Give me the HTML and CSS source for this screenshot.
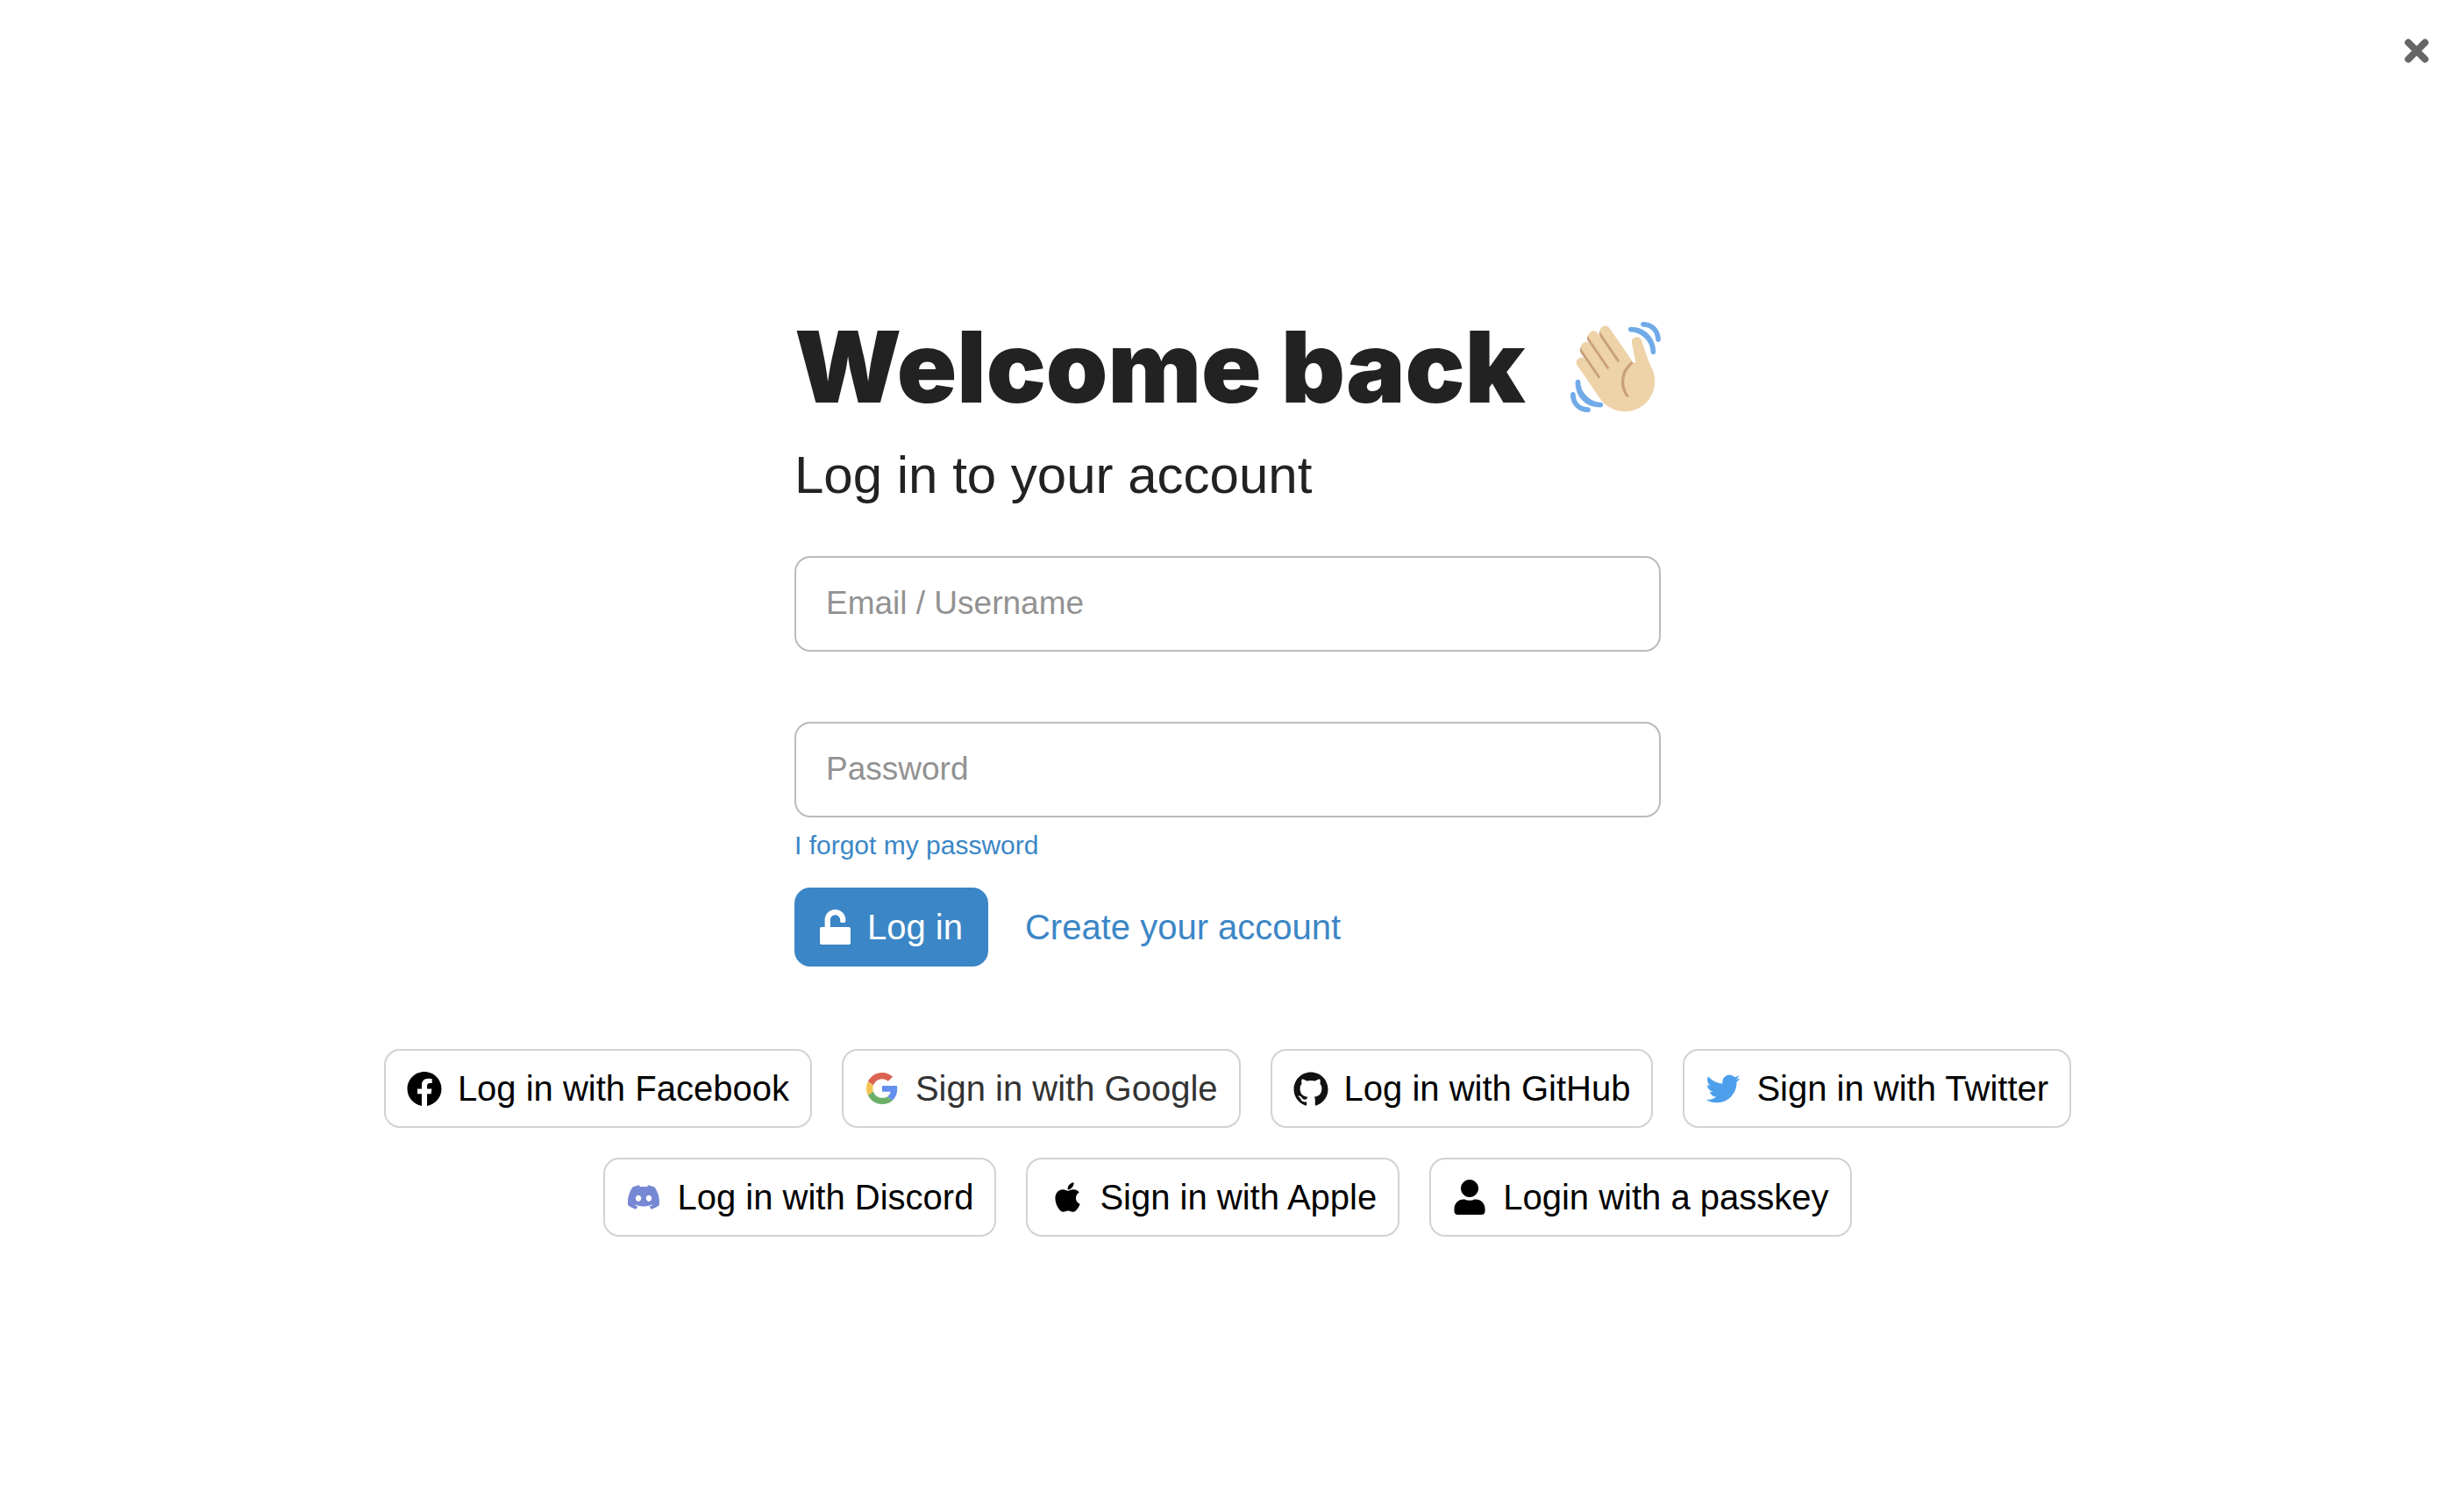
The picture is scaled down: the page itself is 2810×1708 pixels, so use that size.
FILE: index.html
```html
<!DOCTYPE html>
<html lang="en">
<head>
  <meta charset="utf-8">
  <meta name="viewport" content="width=device-width, initial-scale=1">
  <title>Log in</title>
  <link rel="stylesheet" href="styles.css">
</head>
<body>
  <header class="topbar">
    <button class="close" type="button" aria-label="Close">
      <svg viewBox="0 0 28 28" aria-hidden="true"><path d="M4.500 4.500l19 19M23.500 4.500l-19 19"/></svg>
    </button>
  </header>

  <main class="login">
    <section class="panel">
      <div class="title-row">
        <h1 class="title">Welcome back</h1>
        <svg class="wave" viewBox="0 0 36 36" aria-hidden="true">
          <path class="wave-shade" d="M4.861 9.147c.94-.657 2.357-.531 3.201.166l-.968-1.407c-.779-1.111-.5-2.313.612-3.093 1.112-.777 4.263 1.312 4.263 1.312-.786-1.122-.639-2.544.483-3.331 1.122-.784 2.67-.513 3.456.611l10.292 14.720L25 31l-11.083-4.042L4.250 12.625c-.793-1.129-.519-2.686.611-3.478z"/>
          <path class="wave-hand" d="M2.695 17.336s-1.132-1.650.519-2.781c1.649-1.131 2.780.518 2.780.518l5.251 7.658c.181-.302.379-.600.600-.894L4.557 11.210s-1.131-1.649.519-2.780c1.649-1.131 2.780.518 2.780.518l6.855 9.997c.255-.208.516-.417.785-.622L7.549 6.732s-1.131-1.649.519-2.780c1.649-1.131 2.780.518 2.780.518l7.947 11.589c.292-.179.581-.334.871-.498L12.238 4.729s-1.131-1.649.518-2.780c1.649-1.131 2.780.518 2.780.518l7.854 11.454 1.194 1.742c-4.948 3.394-5.419 9.779-2.592 13.902.565.825 1.390.260 1.390.260-3.393-4.949-2.357-10.510 2.592-13.903L24.515 8.620s-.545-1.924 1.378-2.470c1.924-.545 2.470 1.379 2.470 1.379l1.685 5.004c.668 1.984 1.379 3.961 2.320 5.831 2.657 5.280 1.070 11.842-3.940 15.279-5.465 3.747-12.936 2.354-16.684-3.110L2.695 17.336z"/>
          <path class="wave-motion" d="M12 32.042C8 32.042 3.958 28 3.958 24c0-.553-.405-1-.958-1s-1.042.447-1.042 1C1.958 30 6 34.042 12 34.042c.553 0 1-.489 1-1.042s-.447-.958-1-.958z"/>
          <path class="wave-motion" d="M7 34c-3 0-5-2-5-5 0-.553-.447-1-1-1s-1 .447-1 1c0 4 3 7 7 7 .553 0 1-.447 1-1s-.447-1-1-1zM24 2c-.552 0-1 .448-1 1s.448 1 1 1c4 0 8 3.589 8 8 0 .552.448 1 1 1s1-.448 1-1c0-5.514-4-10-10-10z"/>
          <path class="wave-motion" d="M29 .042c-.552 0-1 .406-1 .958s.448 1.042 1 1.042c3 0 4.958 2.225 4.958 4.958 0 .552.489 1 1.042 1s.958-.448.958-1C35.958 3.163 33 .042 29 .042z"/>
        </svg>
      </div>
      <p class="subtitle">Log in to your account</p>

      <form class="form">
        <input class="field" type="text" name="login" placeholder="Email / Username" aria-label="Email or username" autocomplete="username">
        <input class="field" type="password" name="password" placeholder="Password" aria-label="Password" autocomplete="current-password">
        <a class="forgot" href="#forgot">I forgot my password</a>
        <div class="actions">
          <button class="submit" type="submit">
            <svg class="lock" viewBox="0 0 448 512" aria-hidden="true"><path d="M423 256H152V152.900c0-39.600 31.700-72.500 71.300-72.900 40-.4 72.700 32.100 72.700 72v16c0 13.300 10.700 24 24 24h32c13.300 0 24-10.700 24-24v-16C376 68 307.500-.3 223.500 0 139.500.3 72 69.500 72 153.500V256H25c-14 0-25 11-25 25v206c0 14 11 25 25 25h398c14 0 25-11 25-25V281c0-14-11-25-25-25z"/></svg>
            Log in
          </button>
          <a class="create" href="#signup">Create your account</a>
        </div>
      </form>
    </section>

    <section class="providers" aria-label="Other ways to log in">
      <button class="provider" type="button">
        <svg class="icon icon-round" viewBox="0 0 24 24" aria-hidden="true"><path d="M24 12.073c0-6.627-5.373-12-12-12s-12 5.373-12 12c0 5.990 4.388 10.954 10.125 11.854v-8.385H7.078v-3.470h3.047V9.430c0-3.007 1.792-4.669 4.533-4.669 1.312 0 2.686.235 2.686.235v2.953H15.830c-1.491 0-1.956.925-1.956 1.874v2.250h3.328l-.532 3.470h-2.796v8.385C19.612 23.027 24 18.062 24 12.073z"/></svg>
        Log in with Facebook
      </button>
      <button class="provider provider-google" type="button">
        <svg class="icon" viewBox="0 0 48 48" aria-hidden="true">
          <path fill="#db6352" d="M24 9.500c3.540 0 6.710 1.220 9.210 3.600l6.850-6.850C35.900 2.380 30.470 0 24 0 14.620 0 6.510 5.380 2.560 13.220l7.980 6.190C12.430 13.720 17.740 9.500 24 9.500z"/>
          <path fill="#658fef" d="M46.980 24.550c0-1.570-.15-3.090-.38-4.550H24v9.020h12.940c-.58 2.960-2.260 5.480-4.780 7.180l7.730 6c4.510-4.180 7.090-10.360 7.090-17.650z"/>
          <path fill="#f4c454" d="M10.530 28.590c-.48-1.450-.76-2.990-.76-4.590s.27-3.140.76-4.590l-7.980-6.190C.92 16.460 0 20.120 0 24c0 3.880.92 7.540 2.560 10.780l7.970-6.190z"/>
          <path fill="#6aaf6a" d="M24 48c6.480 0 11.930-2.130 15.890-5.810l-7.730-6c-2.150 1.450-4.920 2.300-8.160 2.300-6.260 0-11.570-4.220-13.470-9.910l-7.980 6.190C6.510 42.620 14.620 48 24 48z"/>
        </svg>
        Sign in with Google
      </button>
      <button class="provider" type="button">
        <svg class="icon icon-round" viewBox="0 0 24 24" aria-hidden="true"><path fill="#111" d="M12 .297c-6.630 0-12 5.373-12 12 0 5.303 3.438 9.800 8.205 11.385.600.113.820-.258.820-.577 0-.285-.010-1.040-.015-2.040-3.338.724-4.042-1.610-4.042-1.610C4.422 18.070 3.633 17.700 3.633 17.700c-1.087-.744.084-.729.084-.729 1.205.084 1.838 1.236 1.838 1.236 1.070 1.835 2.809 1.305 3.495.998.108-.776.417-1.305.760-1.605-2.665-.300-5.466-1.332-5.466-5.930 0-1.310.465-2.380 1.235-3.220-.135-.303-.540-1.523.105-3.176 0 0 1.005-.322 3.300 1.230.960-.267 1.980-.399 3-.405 1.020.006 2.040.138 3 .405 2.280-1.552 3.285-1.230 3.285-1.230.645 1.653.240 2.873.120 3.176.765.840 1.230 1.910 1.230 3.220 0 4.610-2.805 5.625-5.475 5.920.420.360.810 1.096.810 2.220 0 1.606-.015 2.896-.015 3.286 0 .315.210.690.825.570C20.565 22.092 24 17.592 24 12.297c0-6.627-5.373-12-12-12"/></svg>
        Log in with GitHub
      </button>
      <button class="provider" type="button">
        <svg class="icon icon-round" viewBox="0 0 24 24" aria-hidden="true"><path fill="#4d9feb" d="M23.953 4.570a10 10 0 01-2.825.775 4.958 4.958 0 002.163-2.723c-.951.555-2.005.959-3.127 1.184a4.920 4.920 0 00-8.384 4.482C7.690 8.095 4.067 6.130 1.640 3.162a4.822 4.822 0 00-.666 2.475c0 1.710.870 3.213 2.188 4.096a4.904 4.904 0 01-2.228-.616v.060a4.923 4.923 0 003.946 4.827 4.996 4.996 0 01-2.212.085 4.936 4.936 0 004.604 3.417 9.867 9.867 0 01-6.102 2.105c-.390 0-.779-.023-1.170-.067a13.995 13.995 0 007.557 2.209c9.053 0 13.998-7.496 13.998-13.985 0-.210 0-.420-.015-.630A9.935 9.935 0 0024 4.590z"/></svg>
        Sign in with Twitter
      </button>
      <button class="provider" type="button">
        <svg class="icon" viewBox="0 0 24 24" aria-hidden="true"><path fill="#7688d4" d="M20.317 4.370a19.791 19.791 0 00-4.885-1.515.074.074 0 00-.079.037c-.211.375-.445.865-.608 1.250-1.845-.276-3.680-.276-5.487 0-.164-.393-.406-.874-.618-1.250a.077.077 0 00-.079-.037 19.736 19.736 0 00-4.885 1.515.070.070 0 00-.032.028C.533 9.046-.319 13.580.099 18.058a.082.082 0 00.031.056c2.053 1.508 4.041 2.423 5.993 3.029a.078.078 0 00.084-.028c.462-.630.873-1.295 1.226-1.994a.076.076 0 00-.042-.106c-.653-.248-1.274-.550-1.872-.892a.077.077 0 01-.008-.128c.126-.094.252-.192.372-.291a.074.074 0 01.078-.011c3.928 1.793 8.180 1.793 12.061 0a.074.074 0 01.079.010c.120.099.246.198.373.292a.077.077 0 01-.007.128 12.299 12.299 0 01-1.873.891.077.077 0 00-.041.107c.360.698.772 1.363 1.225 1.993a.076.076 0 00.084.029c1.961-.607 3.950-1.522 6.002-3.029a.077.077 0 00.031-.055c.500-5.177-.838-9.674-3.549-13.660a.061.061 0 00-.031-.029zM8.020 15.331c-1.183 0-2.157-1.086-2.157-2.419 0-1.333.956-2.419 2.157-2.419 1.211 0 2.176 1.095 2.157 2.419 0 1.333-.956 2.419-2.157 2.419zm7.975 0c-1.183 0-2.157-1.086-2.157-2.419 0-1.333.955-2.419 2.157-2.419 1.211 0 2.176 1.095 2.157 2.419 0 1.333-.946 2.419-2.157 2.419z"/></svg>
        Log in with Discord
      </button>
      <button class="provider" type="button">
        <svg class="icon" viewBox="-28 16 400 480" aria-hidden="true"><path d="M318.700 268.700c-.2-36.700 16.400-64.400 50-84.800-18.800-26.900-47.200-41.700-84.700-44.600-35.500-2.800-74.300 20.700-88.500 20.700-15 0-49.400-19.700-76.400-19.700C63.300 141.200 4 184.800 4 273.500q0 39.300 14.400 81.200c12.800 36.700 59 126.700 107.200 125.200 25.200-.6 43-17.900 75.800-17.900 31.800 0 48.300 17.900 76.400 17.900 48.600-.7 90.400-82.500 102.600-119.300-65.200-30.700-61.700-90-61.700-91.900zm-56.600-164.200c27.300-32.400 24.800-61.900 24-72.500-24.100 1.400-52 16.400-67.900 34.900-17.500 19.800-27.800 44.300-25.600 71.900 26.100 2 49.900-11.400 69.500-34.300z"/></svg>
        Sign in with Apple
      </button>
      <button class="provider" type="button">
        <svg class="icon icon-tall" viewBox="0 0 448 512" aria-hidden="true"><path d="M224 256c70.700 0 128-57.300 128-128S294.700 0 224 0 96 57.300 96 128s57.300 128 128 128zm89.600 32h-16.700c-22.200 10.200-46.900 16-72.900 16s-50.600-5.800-72.900-16h-16.700C60.200 288 0 348.200 0 422.400V464c0 26.500 21.500 48 48 48h352c26.500 0 48-21.500 48-48v-41.600c0-74.200-60.200-134.400-134.400-134.400z"/></svg>
        Login with a passkey
      </button>
    </section>
  </main>
</body>
</html>
```
FILE: styles.css
```css
:root {
  --ink: #222;
  --blue: #3b86c6;
  --radius: 18px;
}

*,
*::before,
*::after {
  box-sizing: border-box;
}

body {
  margin: 0;
  min-height: 100vh;
  background: #fff;
  color: var(--ink);
  font-family: "Liberation Sans", Arial, sans-serif;
  font-size: 40px;
}

h1,
p {
  margin: 0;
}

button,
input {
  font: inherit;
}

button {
  cursor: pointer;
}

a {
  color: var(--blue);
  text-decoration: none;
}

.topbar {
  display: flex;
  justify-content: flex-end;
  padding: 44px 40px 0;
}

.close {
  display: flex;
  padding: 0;
  border: 0;
  background: none;
}

.close svg {
  width: 28px;
  height: 28px;
  fill: none;
  stroke: #666;
  stroke-width: 8;
  stroke-linecap: round;
}

.login {
  display: flex;
  flex-direction: column;
  align-items: center;
  gap: 94px;
  padding: 295px 10px 80px 0;
}

.panel {
  width: 100%;
  max-width: 988px;
}

.title-row {
  display: flex;
  align-items: center;
  justify-content: space-between;
}

.title {
  font-family: Inter, "Open Sans", sans-serif;
  font-size: 113px;
  font-weight: 900;
  line-height: 101px;
  white-space: nowrap;
}

.wave {
  flex: none;
  width: 103px;
  height: 103px;
}

.wave-shade {
  fill: #c9a07a;
}

.wave-hand {
  fill: #eed2a8;
}

.wave-motion {
  fill: #70abe8;
}

.subtitle {
  margin-top: 38px;
  font-size: 60px;
  line-height: 68px;
}

.form {
  display: flex;
  flex-direction: column;
  align-items: flex-start;
  margin-top: 58px;
}

.field {
  width: 100%;
  height: 109px;
  padding: 0 34px 2px;
  border: 2px solid #bbb;
  border-radius: var(--radius);
  background: #fff;
  color: var(--ink);
  font-size: 37px;
}

.field + .field {
  margin-top: 80px;
}

.field::placeholder {
  color: #929292;
  opacity: 1;
}

.forgot {
  margin-top: 15px;
  font-size: 30px;
  line-height: 34px;
}

.actions {
  display: flex;
  align-items: center;
  gap: 42px;
  margin-top: 31px;
}

.submit {
  display: flex;
  align-items: center;
  gap: 19px;
  height: 90px;
  padding: 0 29px;
  border: 0;
  border-radius: var(--radius);
  background: var(--blue);
  color: #fff;
}

.lock {
  width: 35px;
  height: 40px;
  fill: currentColor;
}

.providers {
  display: flex;
  flex-wrap: wrap;
  justify-content: center;
  gap: 34px;
  max-width: 2000px;
}

.provider {
  display: flex;
  align-items: center;
  gap: 18px;
  height: 90px;
  padding: 0 24px;
  border: 2px solid #d2d2d2;
  border-radius: var(--radius);
  background: #fff;
  color: #000;
  white-space: nowrap;
}

.provider-google {
  color: #333;
}

.icon {
  width: 40px;
  height: 36px;
  fill: currentColor;
}

.icon-round {
  height: 39px;
}

.icon-tall {
  height: 40px;
}
```
